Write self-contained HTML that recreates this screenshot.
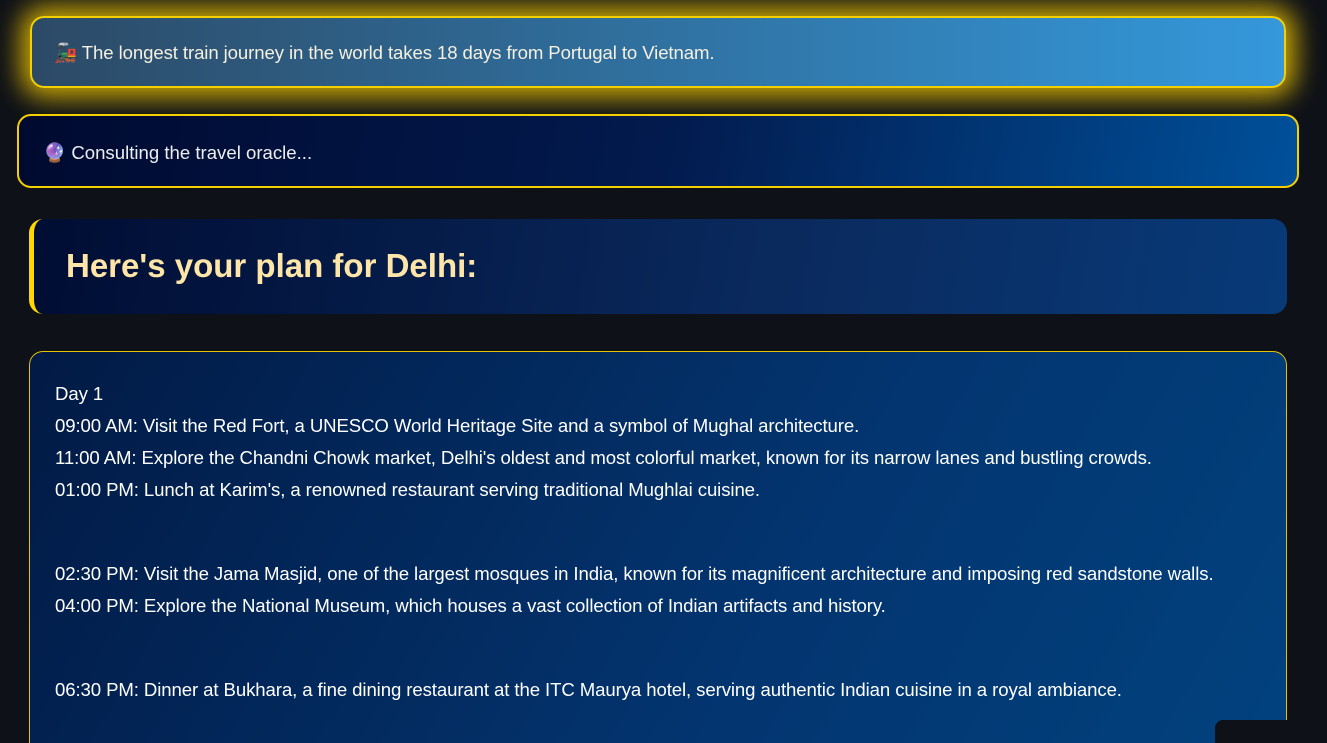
<!DOCTYPE html>
<html><head><meta charset="utf-8"><style>
html,body{margin:0;width:1327px;height:743px;overflow:hidden}
body{background:#0e1117;font-family:"Liberation Sans",sans-serif;color:#fff;position:relative}
.b1{position:absolute;left:30px;top:16px;width:1256px;height:72px;box-sizing:border-box;border:2px solid #f5d000;border-radius:14px;background:linear-gradient(90deg,#2c4a66,#3498db);box-shadow:0 0 26px 9px rgba(255,210,0,.8);}
.b1 span{position:absolute;left:22px;top:24px;font-size:18.6px;color:#f5f0e0;letter-spacing:-0.1px}
.b2{position:absolute;left:17px;top:114px;width:1282px;height:74px;box-sizing:border-box;border:2px solid #f5d000;border-radius:14px;background:linear-gradient(100deg,#000a30 0%,#021a4d 50%,#00509a 100%)}
.b2 span{position:absolute;left:24px;top:26px;font-size:18.6px;color:#eee}
.h{position:absolute;left:29px;top:219px;width:1258px;height:95px;box-sizing:border-box;border-left:5px solid #ffd700;border-radius:14px;background:linear-gradient(100deg,#000d33,#0a2a5e 60%,#083a78)}
.h span{position:absolute;left:32px;top:28px;font-size:33px;font-weight:bold;color:#ffe6a8}
.p{position:absolute;left:29px;top:351px;width:1258px;height:420px;box-sizing:border-box;border:1px solid #e6c300;border-radius:14px;background:linear-gradient(120deg,#021a45,#033570 60%,#01427e);padding:26px 25px;font-size:18.6px;line-height:32px;letter-spacing:-0.1px}
.p div{white-space:nowrap}
.g{height:52px}
.tb{position:absolute;left:1215px;top:720px;width:140px;height:40px;background:#0e1117;border-radius:8px}
</style></head><body>
<div class="b1"><span>🚂 The longest train journey in the world takes 18 days from Portugal to Vietnam.</span></div>
<div class="b2"><span>🔮 Consulting the travel oracle...</span></div>
<div class="h"><span>Here's your plan for Delhi:</span></div>
<div class="p"><div>Day 1</div><div>09:00 AM: Visit the Red Fort, a UNESCO World Heritage Site and a symbol of Mughal architecture.</div><div>11:00 AM: Explore the Chandni Chowk market, Delhi's oldest and most colorful market, known for its narrow lanes and bustling crowds.</div><div>01:00 PM: Lunch at Karim's, a renowned restaurant serving traditional Mughlai cuisine.</div><div class="g"></div><div>02:30 PM: Visit the Jama Masjid, one of the largest mosques in India, known for its magnificent architecture and imposing red sandstone walls.</div><div>04:00 PM: Explore the National Museum, which houses a vast collection of Indian artifacts and history.</div><div class="g"></div><div>06:30 PM: Dinner at Bukhara, a fine dining restaurant at the ITC Maurya hotel, serving authentic Indian cuisine in a royal ambiance.</div></div>
<div class="tb"></div>
</body></html>
